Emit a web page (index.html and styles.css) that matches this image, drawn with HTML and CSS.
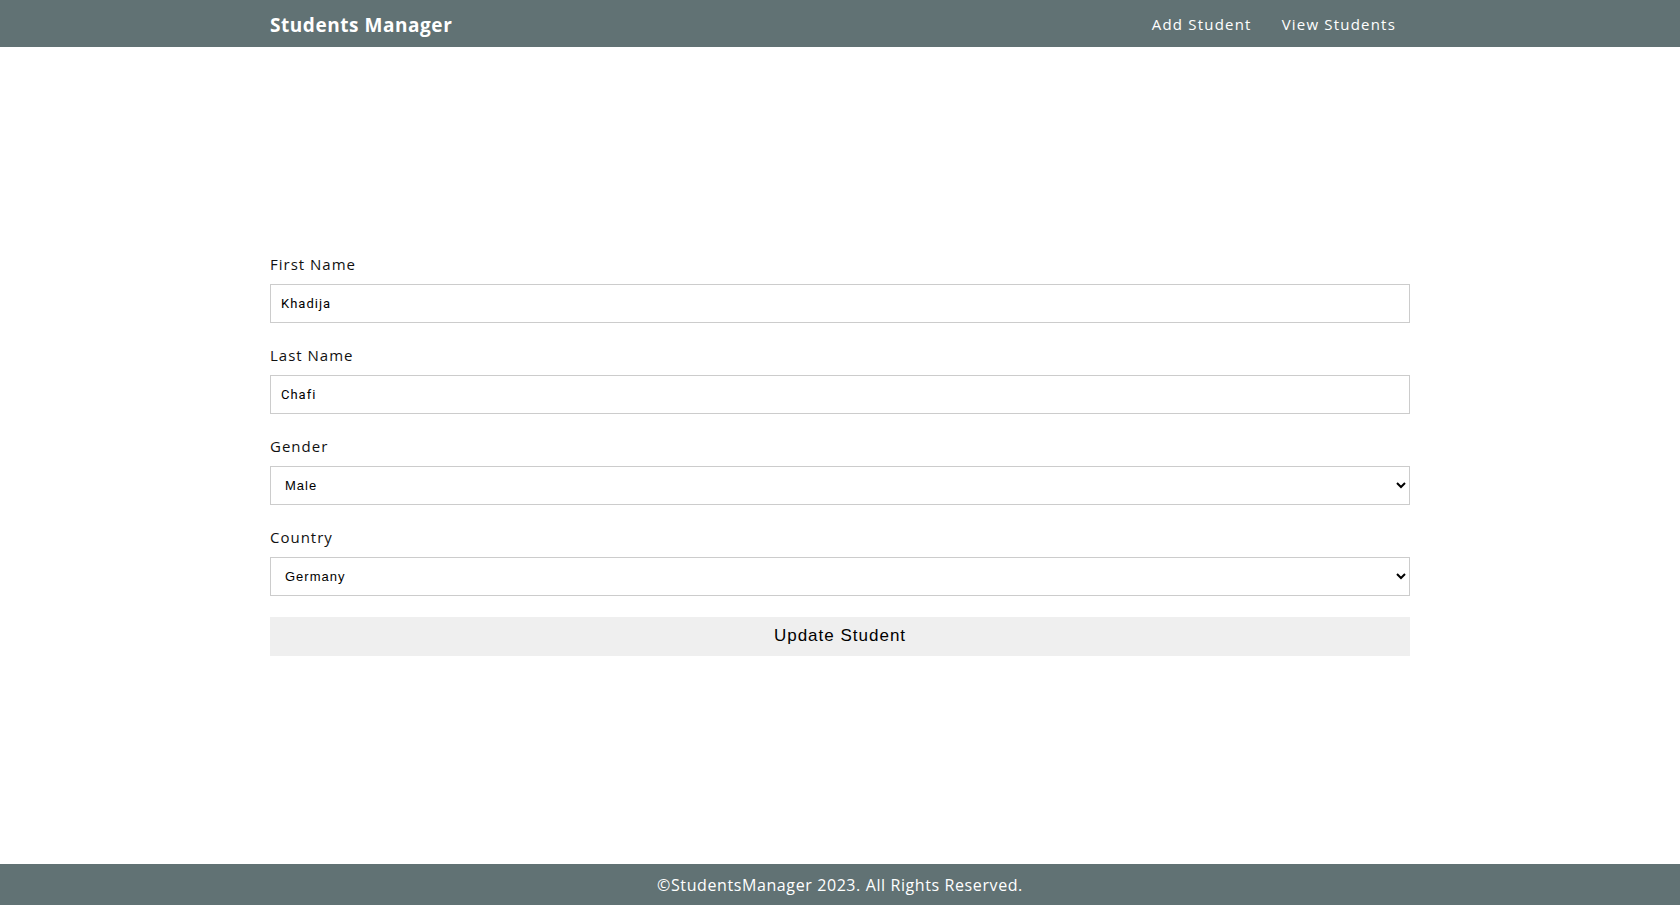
FILE: index.html
```html
<!DOCTYPE html>
<html lang="en">
<head>
<meta charset="utf-8">
<title>Students Manager</title>
<link rel="stylesheet" href="styles.css">
</head>
<body>
<header class="topbar">
  <div class="container bar-inner">
    <a class="brand" href="#">Students Manager</a>
    <nav class="nav">
      <a href="#">Add Student</a>
      <a href="#">View Students</a>
    </nav>
  </div>
</header>
<main class="main">
  <form class="container student-form">
    <div class="form-group">
      <label for="fn">First Name</label>
      <input id="fn" type="text" value="Khadija">
    </div>
    <div class="form-group">
      <label for="ln">Last Name</label>
      <input id="ln" type="text" value="Chafi">
    </div>
    <div class="form-group">
      <label for="gd">Gender</label>
      <select id="gd">
        <option selected>Male</option>
        <option>Female</option>
      </select>
    </div>
    <div class="form-group last">
      <label for="ct">Country</label>
      <select id="ct">
        <option>Morocco</option>
        <option selected>Germany</option>
        <option>France</option>
      </select>
    </div>
    <button type="button" class="submit">Update Student</button>
  </form>
</main>
<footer class="footer">
  <p>©StudentsManager 2023. All Rights Reserved.</p>
</footer>
</body>
</html>
```
FILE: styles.css
```css
* { box-sizing: border-box; }
html, body { margin: 0; padding: 0; }
body {
  min-height: 100vh;
  display: flex;
  flex-direction: column;
  font-family: "Open Sans", "Noto Sans", sans-serif;
  color: #111;
  background: #fff;
}
.container {
  width: 1140px;
  margin: 0 auto;
}
.topbar {
  background: #617274;
  height: 47px;
}
.bar-inner {
  height: 47px;
  display: flex;
  align-items: center;
  justify-content: space-between;
}
.brand {
  color: #fff;
  text-decoration: none;
  font-weight: 700;
  font-size: 19px;
  letter-spacing: 0.55px;
  padding-top: 2px;
}
.nav { display: flex; }
.nav a {
  color: #fff;
  text-decoration: none;
  font-size: 15px;
  letter-spacing: 1.2px;
  padding: 0 15px;
}
.nav a:last-child { padding-right: 14px; }
.main {
  flex: 1;
  display: flex;
  align-items: center;
  padding-bottom: 2px;
}
.student-form {
  display: flex;
  flex-direction: column;
}
.form-group {
  display: flex;
  flex-direction: column;
  margin-bottom: 22px;
}
.form-group.last { margin-bottom: 21px; }
.form-group label {
  font-size: 15px;
  line-height: 20px;
  letter-spacing: 1px;
  margin-bottom: 10px;
  color: #111;
}
.form-group input,
.form-group select {
  height: 39px;
  border: 1px solid #ccc;
  border-radius: 0;
  padding: 0 10px;
  font-size: 13px;
  letter-spacing: 1px;
  color: #000;
  background: #fff;
}
.form-group input { font-family: Roboto, "Liberation Sans", sans-serif; padding-top: 1px; }
.form-group select { font-family: "Liberation Sans", Arial, sans-serif; padding-top: 1px; }
.submit {
  height: 39px;
  border: none;
  background: #efefef;
  font-family: "Liberation Sans", Arial, sans-serif;
  font-size: 17px;
  letter-spacing: 1px;
  color: #000;
}
.footer {
  background: #617274;
  height: 41px;
  margin-bottom: 18px;
  display: flex;
  align-items: center;
  justify-content: center;
}
.footer p {
  margin: 0;
  color: #fff;
  font-size: 16px;
  letter-spacing: 0.6px;
}
```
